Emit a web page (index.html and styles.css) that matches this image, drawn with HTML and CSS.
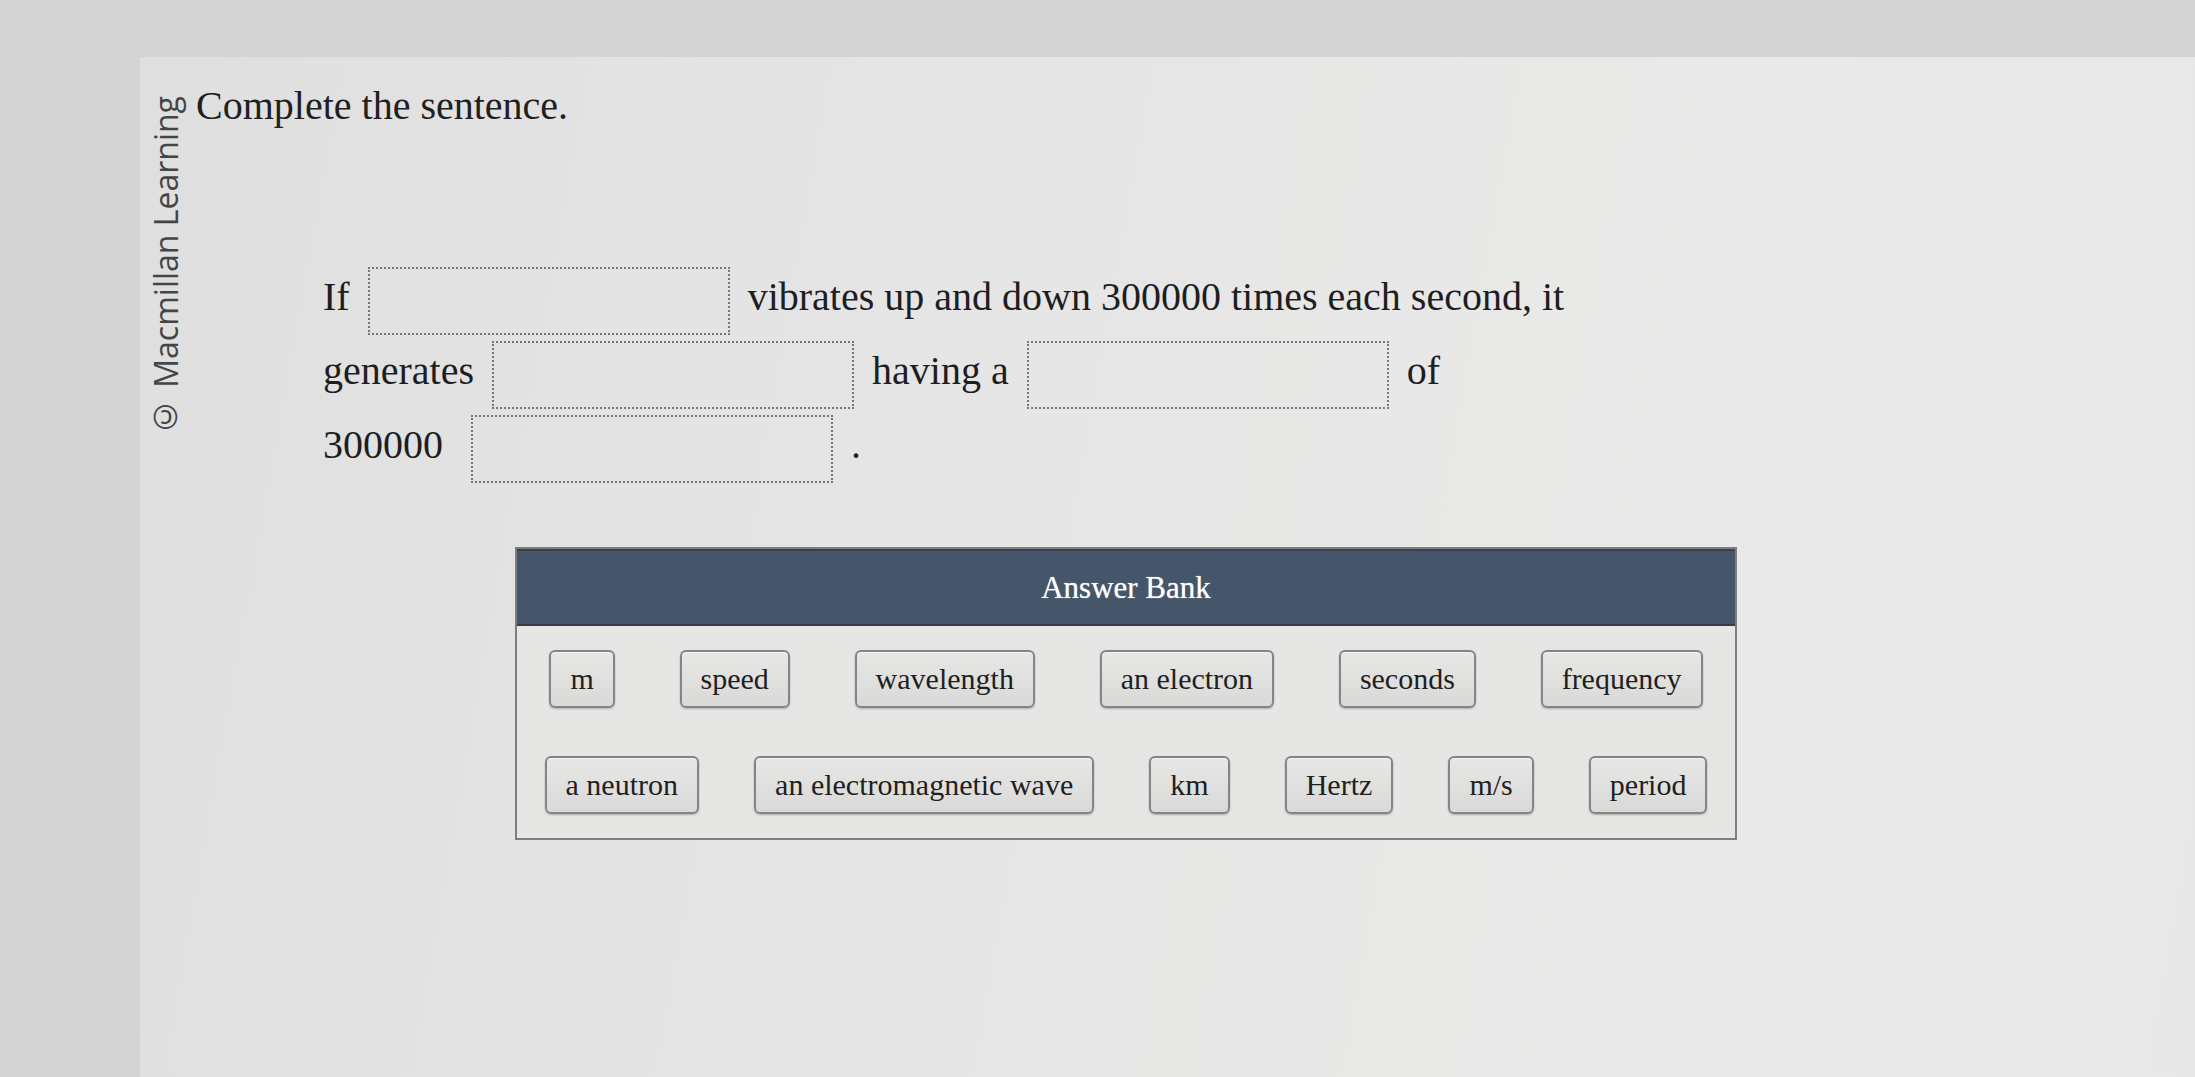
FILE: index.html
```html
<!DOCTYPE html>
<html lang="en">
<head>
<meta charset="utf-8">
<title>Complete the sentence</title>
<link rel="stylesheet" href="styles.css">
</head>
<body>
<main class="card">
  <aside class="credit">© Macmillan Learning</aside>
  <section class="question">
    <h1 class="prompt">Complete the sentence.</h1>
    <p class="sentence"><span class="word">If</span> <span class="blank"></span> <span class="word">vibrates up and down 300000 times each second, it</span> <span class="word">generates</span> <span class="blank"></span> <span class="word">having a</span> <span class="blank"></span> <span class="word">of</span> <span class="keep"><span class="word">300000</span>&nbsp; <span class="blank"></span> <span class="word">.</span></span></p>
    <div class="bank">
      <div class="bank-title">Answer Bank</div>
      <div class="bank-items">
        <span class="chip">m</span>
        <span class="chip">speed</span>
        <span class="chip">wavelength</span>
        <span class="chip">an electron</span>
        <span class="chip">seconds</span>
        <span class="chip">frequency</span>
        <span class="chip">a neutron</span>
        <span class="chip">an electromagnetic wave</span>
        <span class="chip">km</span>
        <span class="chip">Hertz</span>
        <span class="chip">m/s</span>
        <span class="chip">period</span>
      </div>
    </div>
  </section>
</main>
</body>
</html>
```
FILE: styles.css
```css
html, body {
  margin: 0;
  padding: 0;
}
body {
  background: #d4d4d4;
  width: 2195px;
  height: 1077px;
  overflow: hidden;
  font-family: "Liberation Serif", "Times New Roman", serif;
  color: #1e1e1e;
}
.card {
  margin: 57px 0 0 140px;
  height: 1020px;
  box-sizing: border-box;
  padding: 25px 0 0 10px;
  display: flex;
  align-items: flex-start;
  background: linear-gradient(100deg, #dfdfdf 0%, #e5e5e5 35%, #e9e9e8 70%, #e8e8e8 100%);
}
.credit {
  writing-mode: vertical-rl;
  transform: rotate(180deg);
  font-family: "Open Sans", "Noto Sans", sans-serif;
  font-size: 32px;
  line-height: 32px;
  color: #454545;
  margin-top: 14px;
  white-space: nowrap;
}
.question {
  margin-left: 14px;
  display: flex;
  flex-direction: column;
  align-items: flex-start;
}
.prompt {
  margin: 0;
  font-size: 40px;
  line-height: 48px;
  font-weight: normal;
  color: #202020;
}
.sentence {
  margin: 134px 0 0 127px;
  width: 1300px;
  font-size: 40px;
  line-height: 48px;
  color: #1e1e1e;
}
.word {
  white-space: nowrap;
}
.keep {
  white-space: nowrap;
}
.blank {
  display: inline-block;
  box-sizing: border-box;
  width: 362px;
  height: 68px;
  margin: 3px 8px;
  vertical-align: middle;
  border: 2px dotted #777777;
}
.bank {
  margin: 61px 0 0 319px;
  width: 1222px;
  box-sizing: border-box;
  border: 2px solid #7e7e7e;
  background: #e6e6e4;
}
.bank-title {
  background: #45556a;
  border-top: 2px solid #38434f;
  border-bottom: 2px solid #343e4b;
  color: #ffffff;
  text-align: center;
  font-size: 31px;
  line-height: 73px;
  text-shadow: 0 0 1px rgba(255, 255, 255, 0.7);
}
.bank-items {
  display: flex;
  flex-wrap: wrap;
  justify-content: space-around;
}
.chip {
  margin: 24px 20px;
  padding: 9px 19px;
  font-size: 30px;
  line-height: 36px;
  color: #1f1f1f;
  border: 2px solid #858585;
  border-radius: 6px;
  background: linear-gradient(#e7e7e6, #d9d9d8);
  box-shadow: 0 1px 2px rgba(0, 0, 0, 0.25), inset 0 1px 0 #f3f3f3;
  white-space: nowrap;
}
```
